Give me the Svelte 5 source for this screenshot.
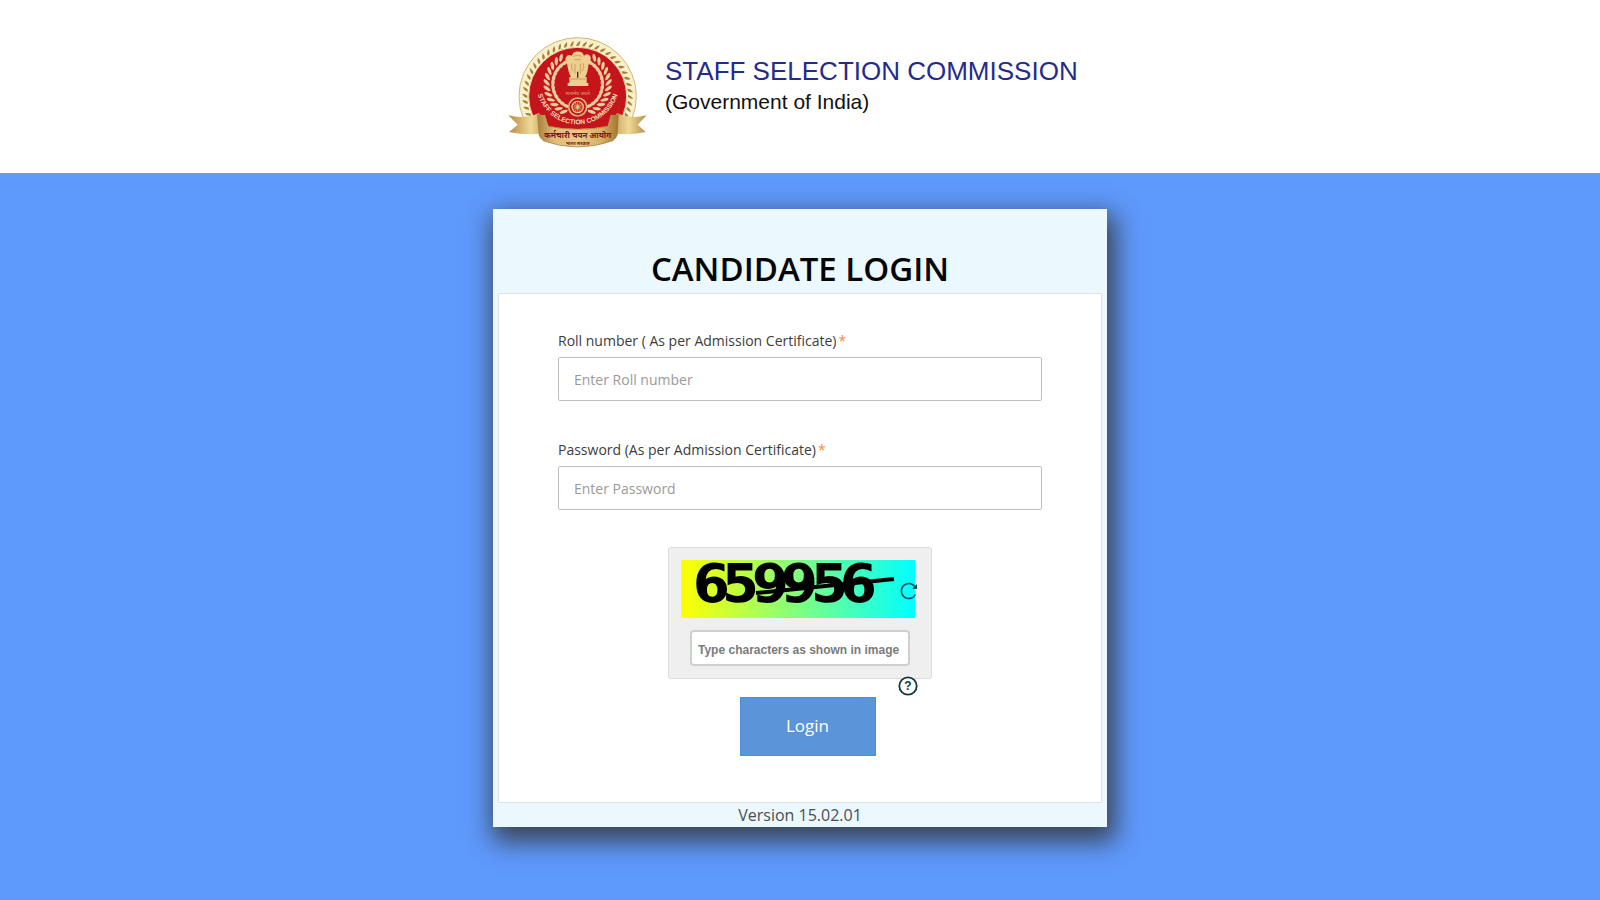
<script lang="ts">
	let roll = $state('');
	let password = $state('');
	let captcha = $state('');

	const code = '659956';
	// the captcha digits run into each other
	const digitX = [12, 41, 71, 100, 130, 159];

	// rope marks round the rim of the seal
	const rope = Array.from({ length: 52 }, (_, i) => (i * 360) / 52);
	// wreath leaves, from the tips down to the wheel
	const leaves = Array.from({ length: 12 }, (_, i) => 38 + i * 11);

	const login = (e: SubmitEvent) => {
		e.preventDefault();
	};
</script>

<header class="masthead">
	<div class="brand">
		<svg class="seal" viewBox="20 30 420 336" role="img" aria-label="Staff Selection Commission seal">
			<defs>
				<linearGradient id="gold" x1="0" x2="1" y1="0" y2="0">
					<stop offset="0" stop-color="#a87d3c" />
					<stop offset="0.2" stop-color="#dcbb77" />
					<stop offset="0.5" stop-color="#e8cc8c" />
					<stop offset="0.8" stop-color="#d4af63" />
					<stop offset="1" stop-color="#a1742f" />
				</linearGradient>
				<linearGradient id="tail" x1="0" x2="1" y1="0" y2="0">
					<stop offset="0" stop-color="#b8893f" />
					<stop offset="0.55" stop-color="#efd998" />
					<stop offset="1" stop-color="#b58a45" />
				</linearGradient>
				<path id="motto" d="M107 170 A125 125 0 0 0 357 170" />
				<clipPath id="above-ribbon">
					<path d="M20 30 H444 V290 H350 V320 H116 V290 H20 Z" />
				</clipPath>
			</defs>

			<g clip-path="url(#above-ribbon)">
				<circle cx="232" cy="211" r="176" fill="#f8f0cd" stroke="#d3b56d" stroke-width="3" />
				{#each rope as a (a)}
					<path
						d="M227 60 Q229 50 240 44 Q240 54 234 60 Z"
						fill="#a57f35"
						transform="rotate({a} 232 211)"
					/>
				{/each}
				<circle cx="232" cy="211" r="147" fill="#c4151c" stroke="#eddca0" stroke-width="3" />
			</g>

			{#each leaves as a (a)}
				<g fill="#e8cc9c">
					<g transform="rotate({-a} 232 174)">
						<path d="M232 84 q13 -16 20 -10 q-3 12 -20 17 Z" />
						<path d="M232 96 q13 -4 20 5 q-10 8 -20 2 Z" />
					</g>
					<g transform="translate(464 0) scale(-1 1) rotate({-a} 232 174)">
						<path d="M232 84 q13 -16 20 -10 q-3 12 -20 17 Z" />
						<path d="M232 96 q13 -4 20 5 q-10 8 -20 2 Z" />
					</g>
				</g>
			{/each}

			<!-- lion capital -->
			<g fill="#edcf90">
				<path
					d="M219 80 q13 -7 27 0 l5 9 q14 -10 20 5 q2 13 -6 20 l-4 24 q-4 12 -9 18 h-38 q-6 -8 -9 -19 l-5 -24 q-8 -9 -3 -19 q6 -11 17 -5 Z"
				/>
				<path d="M207 153 h52 v19 h-52 Z" />
				<path d="M202 171 h62 v9 h-62 Z" />
			</g>
			<path
				d="M219 91 q13 -8 26 0 M222 101 h20 M214 112 q-3 12 4 23 M249 112 q4 12 -3 23 M224 114 v28 M240 114 v28 M210 159 h46"
				fill="none"
				stroke="#b98848"
				stroke-width="2"
			/>
			<path d="M232 137 v18" stroke="#5e1c12" stroke-width="4" />
			<text class="small-gold" x="232" y="206" text-anchor="middle">सत्यमेव जयते</text>

			<circle cx="232" cy="243" r="27" fill="#c4151c" stroke="#d9b579" stroke-width="5" />
			<circle cx="232" cy="243" r="17" fill="none" stroke="#e7c682" stroke-width="4" />
			{#each [0, 30, 60, 90, 120, 150] as a (a)}
				<path
					d="M232 226 V260"
					stroke="#e7c682"
					stroke-width="2"
					transform="rotate({a} 232 243)"
				/>
			{/each}
			<circle cx="232" cy="243" r="5" fill="#e7c682" />

			<path d="M24 268 Q76 280 116 261 L147 318 Q92 332 26 318 L52 296 Z" fill="url(#tail)" />
			<path d="M439 268 Q390 280 350 261 L319 318 Q374 332 436 318 L412 296 Z" fill="url(#tail)" />
			<path d="M116 304 L146 316 V298 Z M350 304 L320 316 V298 Z" fill="#8b5b22" />
			<path
				d="M110 262 Q116 270 134 266 L144 300 Q232 318 322 300 L331 266 Q350 270 355 262 L352 326 Q348 338 338 344 Q232 382 128 344 Q118 338 115 326 Z"
				fill="url(#gold)"
			/>
			<path
				d="M144 301 Q232 319 322 301 M128 344 Q232 382 338 344"
				fill="none"
				stroke="#a5793a"
				stroke-width="2"
			/>

			<text class="motto">
				<textPath href="#motto" startOffset="50%" text-anchor="middle">
					STAFF SELECTION COMMISSION
				</textPath>
			</text>
			<text class="ribbon" x="232" y="336" text-anchor="middle">कर्मचारी चयन आयोग</text>
			<text class="ribbon-small" x="232" y="356" text-anchor="middle">भारत सरकार</text>
		</svg>
		<div>
			<h1>STAFF SELECTION COMMISSION</h1>
			<p class="govt">(Government of India)</p>
		</div>
	</div>
</header>

<main>
	<section class="card">
		<h2>CANDIDATE LOGIN</h2>
		<form onsubmit={login}>
			<div class="field">
				<label for="roll">Roll number ( As per Admission Certificate)<span class="req">*</span></label>
				<input id="roll" type="text" placeholder="Enter Roll number" bind:value={roll} />
			</div>
			<div class="field">
				<label for="password">Password (As per Admission Certificate)<span class="req">*</span></label>
				<input id="password" type="password" placeholder="Enter Password" bind:value={password} />
			</div>

			<div class="captcha">
				<div class="captcha-image">
					<svg viewBox="0 0 234 58" role="img" aria-label="Captcha">
						<text class="digits" x={digitX.join(' ')} y="42">{code}</text>
						<path d="M75 33 L213 19" stroke="#000" stroke-width="4" />
					</svg>
					<button class="refresh" type="button" aria-label="Refresh captcha">
						<svg viewBox="0 0 18 18">
							<path
								d="M15.5 5.5 A7.5 7.5 0 1 0 15.5 12.5"
								fill="none"
								stroke="#12505f"
								stroke-width="1.6"
							/>
							<path d="M17 2 V7 H12 Z" fill="#12505f" />
						</svg>
					</button>
				</div>
				<input
					class="captcha-input"
					type="text"
					aria-label="Captcha characters"
					placeholder="Type characters as shown in image"
					bind:value={captcha}
				/>
				<button class="help" type="button" aria-label="Help">
					<svg viewBox="0 0 20 20">
						<circle cx="10" cy="10" r="8.7" fill="#fff" stroke="#12373f" stroke-width="1.8" />
						<text class="mark" x="10" y="14" text-anchor="middle">?</text>
					</svg>
				</button>
			</div>

			<button class="login" type="submit">Login</button>
		</form>
		<footer>Version 15.02.01</footer>
	</section>
</main>

<style>
	:global(body) {
		background: #5e99fc;
	}
	.masthead {
		background: #fff;
		padding: 36px 0 25px;
	}
	.brand {
		box-sizing: border-box;
		width: 100%;
		max-width: 614px;
		margin: 0 auto;
		padding-left: 14px;
		display: flex;
		gap: 18px;
	}
	.seal {
		display: block;
		width: 140px;
		height: 112px;
		flex: none;
	}
	.motto {
		font: bold 20px 'Liberation Sans', Arial, sans-serif;
		fill: #f6dcb4;
	}
	.small-gold {
		font: 15px 'Noto Sans', sans-serif;
		fill: #e7a06a;
	}
	.ribbon {
		font: bold 24px 'Noto Sans', sans-serif;
		fill: #7a1a12;
	}
	.ribbon-small {
		font: bold 14px 'Noto Sans', sans-serif;
		fill: #7a1a12;
	}
	h1 {
		margin: 19px 0 0;
		font: 26px/32px 'Liberation Sans', Arial, sans-serif;
		color: #252b8e;
	}
	.govt {
		margin: 0;
		font: 21px/30px 'Liberation Sans', Arial, sans-serif;
		color: #111;
	}
	main {
		padding: 36px 0 72px;
		font-family: 'Open Sans', sans-serif;
	}
	.card {
		box-sizing: border-box;
		width: 100%;
		max-width: 614px;
		margin: 0 auto;
		padding: 38px 5px 0;
		background: #ebf8fd;
		box-shadow: 4px 10px 24px 4px rgba(50, 50, 50, 0.85);
	}
	h2 {
		margin: 0 0 2px;
		font-size: 33px;
		font-weight: 600;
		line-height: 44px;
		text-align: center;
		color: #050505;
	}
	form {
		padding: 36px 59px 46px;
		display: flex;
		flex-direction: column;
		background: #fff;
		border: 1px solid #dde2e7;
	}
	.field {
		margin-bottom: 38px;
	}
	.field + .field {
		margin-bottom: 37px;
	}
	label {
		display: block;
		margin-bottom: 5px;
		font-size: 14px;
		line-height: 22px;
		color: #3c3c3c;
	}
	.req {
		margin-left: 2px;
		color: #f08a3c;
	}
	.field input {
		box-sizing: border-box;
		display: block;
		width: 100%;
		height: 44px;
		padding: 0 15px;
		border: 1px solid #bdbdbd;
		border-radius: 2px;
		background: #fff;
		font: 14px 'Open Sans', sans-serif;
		color: #333;
	}
	input::placeholder {
		color: #9a9a9a;
		opacity: 1;
	}
	.captcha {
		position: relative;
		box-sizing: border-box;
		width: 264px;
		align-self: center;
		padding: 12px;
		background: #efeff0;
		border: 1px solid #dcdcdc;
		border-radius: 3px;
	}
	.captcha-image {
		position: relative;
		width: 234px;
		height: 58px;
		background: linear-gradient(to right, #ff0, #0ff);
	}
	.captcha-image > svg {
		display: block;
		width: 234px;
		height: 58px;
		overflow: visible;
	}
	.digits {
		font: bold 53px 'DejaVu Sans', sans-serif;
	}
	.refresh,
	.help {
		position: absolute;
		padding: 0;
		border: 0;
		background: none;
		cursor: pointer;
	}
	.refresh svg,
	.help svg {
		display: block;
		width: 100%;
		height: 100%;
	}
	.refresh {
		right: -3px;
		top: 22px;
		width: 18px;
		height: 18px;
	}
	.help {
		right: 13px;
		bottom: -18px;
		width: 20px;
		height: 20px;
	}
	.mark {
		font: bold 12px 'Liberation Sans', Arial, sans-serif;
		fill: #12373f;
	}
	.captcha-input {
		box-sizing: border-box;
		display: block;
		width: 220px;
		height: 36px;
		margin: 12px auto 0;
		padding: 3px 6px 0;
		border: 2px solid #cfcfcf;
		border-radius: 4px;
		background: #fff;
		font: bold 12px 'Liberation Sans', Arial, sans-serif;
	}
	.captcha-input::placeholder {
		color: #7b7b7b;
	}
	.login {
		align-self: center;
		width: 136px;
		height: 59px;
		margin: 18px 0 0 15px;
		padding-bottom: 4px;
		border: 1px solid #4f8edb;
		background: #5b94d8;
		font: 17px 'Open Sans', sans-serif;
		color: #fff;
		cursor: pointer;
	}
	footer {
		font-size: 16px;
		line-height: 24px;
		text-align: center;
		color: #4a4f55;
	}
</style>
